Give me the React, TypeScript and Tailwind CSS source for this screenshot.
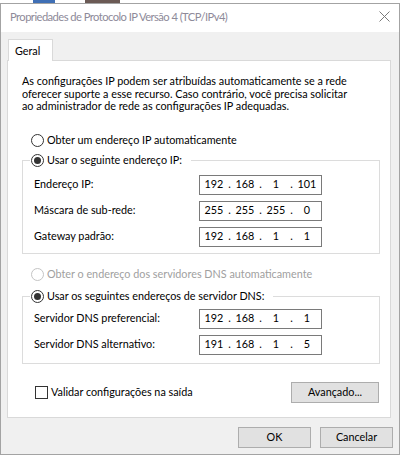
import React from 'react';

// Windows radio button
const Radio = ({ checked = false, disabled = false }: { checked?: boolean; disabled?: boolean }) => (
  <span
    className={`w-[13px] h-[13px] rounded-full border bg-white flex items-center justify-center shrink-0 ${
      disabled ? 'border-[#c4c4c4]' : 'border-[#333333]'
    }`}
  >
    {checked && <span className="w-[7px] h-[7px] rounded-full bg-[#333333]" />}
  </span>
);

// IP address control: four centred octets split by dots
const IpBox = ({ parts }: { parts: string[] }) => (
  <div className="w-[123px] h-[20px] border border-[#7a7a7a] bg-white flex items-center text-black">
    {parts.map((p, i) => (
      <React.Fragment key={i}>
        {i > 0 && <span className="w-[3px] text-center">.</span>}
        <span className="w-[28px] text-center">{p}</span>
      </React.Fragment>
    ))}
  </div>
);

const Row = ({ label, parts, last = false }: { label: string; parts: string[]; last?: boolean }) => (
  <div className={`flex items-center h-[20px] ${last ? '' : 'mb-[6px]'}`}>
    <span className="w-[176px] pl-[11px]">{label}</span>
    <IpBox parts={parts} />
  </div>
);

const App = () => {
  return (
    <div className="w-[402px] h-[459px] bg-white overflow-hidden font-['Lato','Noto_Sans',sans-serif] text-[10.8px] text-black">
      {/* bits of the desktop behind the dialog */}
      <div className="h-[3px] flex">
        <div className="w-[33px]" />
        <div className="w-[22px] bg-[#3f6fb5]" />
        <div className="w-[30px]" />
        <div className="w-[35px] bg-[#6b5a55]" />
      </div>

      <div className="w-[400px] h-[452px] border border-[#a3a3a3] flex flex-col">
        {/* title bar */}
        <div className="h-[28px] bg-white flex items-center justify-between pl-[9px] pr-[9px] pb-[2px]">
          <span className="text-[11.2px] tracking-[-0.55px] text-[#8e8a99]">Propriedades de Protocolo IP Versão 4 (TCP/IPv4)</span>
          <svg width="11" height="11" viewBox="0 0 11 11" className="mb-[1px]">
            <path d="M0.5 0.5 L10.5 10.5 M10.5 0.5 L0.5 10.5" stroke="#7a7a7a" strokeWidth="1" />
          </svg>
        </div>

        {/* body */}
        <div className="flex-1 bg-[#f0f0f0] pt-[7px] pl-[6px] pr-[6px] flex flex-col">
          <div className="flex pl-[1px]">
            <div className="w-[45px] h-[22px] bg-white border border-b-0 border-[#d9d9d9] pl-[6px] pt-[3px] relative z-10 -mb-px">
              Geral
            </div>
          </div>

          <div className="w-[384px] h-[358px] bg-white border border-[#d9d9d9] pt-[14px] pl-[14px] pr-[10px]">
            <p className="leading-[12.5px] w-[358px]">
              As configurações IP podem ser atribuídas automaticamente se a rede
              <br />
              oferecer suporte a esse recurso. Caso contrário, você precisa solicitar
              <br />
              ao administrador de rede as configurações IP adequadas.
            </p>

            <div className="flex items-center gap-[3px] h-[13px] mt-[21px] pl-[9px]">
              <Radio />
              <span>Obter um endereço IP automaticamente</span>
            </div>

            <div className="w-[358px] h-[94px] border border-[#dcdcdc] mt-[13px]">
              <div className="flex items-center gap-[3px] h-[13px] -mt-[7px] ml-[7px] pl-[1px] pr-[9px] bg-white w-fit">
                <Radio checked />
                <span>Usar o seguinte endereço IP:</span>
              </div>
              <div className="mt-[8px]">
                <Row label="Endereço IP:" parts={['192', '168', '1', '101']} />
                <Row label="Máscara de sub-rede:" parts={['255', '255', '255', '0']} />
                <Row label="Gateway padrão:" parts={['192', '168', '1', '1']} last />
              </div>
            </div>

            <div className="flex items-center gap-[3px] h-[13px] mt-[14px] pl-[9px] text-[#a0a0a0]">
              <Radio disabled />
              <span>Obter o endereço dos servidores DNS automaticamente</span>
            </div>

            <div className="w-[358px] h-[68px] border border-[#dcdcdc] mt-[15px]">
              <div className="flex items-center gap-[3px] h-[13px] -mt-[7px] ml-[7px] pl-[1px] pr-[9px] bg-white w-fit">
                <Radio checked />
                <span>Usar os seguintes endereços de servidor DNS:</span>
              </div>
              <div className="mt-[6px]">
                <Row label="Servidor DNS preferencial:" parts={['192', '168', '1', '1']} />
                <Row label="Servidor DNS alternativo:" parts={['191', '168', '1', '5']} last />
              </div>
            </div>

            <div className="flex items-center justify-between h-[21px] mt-[18px] pl-[13px] pr-[1px]">
              <div className="flex items-center gap-[3px]">
                <span className="w-[13px] h-[13px] border border-[#333333] bg-white" />
                <span>Validar configurações na saída</span>
              </div>
              <button className="w-[88px] h-[21px] bg-[#e1e1e1] border border-[#adadad]">Avançado...</button>
            </div>
          </div>

          <div className="flex justify-end gap-[9px] mt-[9px]">
            <button className="w-[73px] h-[21px] bg-[#e1e1e1] border border-[#adadad]">OK</button>
            <button className="w-[73px] h-[21px] bg-[#e1e1e1] border border-[#adadad]">Cancelar</button>
          </div>
        </div>
      </div>
    </div>
  );
};

export default App;
